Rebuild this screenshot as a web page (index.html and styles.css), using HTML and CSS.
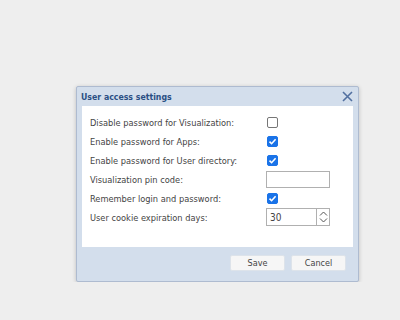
FILE: index.html
```html
<!DOCTYPE html>
<html lang="en">
<head>
  <meta charset="UTF-8" />
  <title>User access settings</title>
  <link rel="stylesheet" href="styles.css">
</head>
<body>
  <div class="dialog">
    <div class="dialog-title">
      <span>User access settings</span>
      <svg class="close" width="11" height="11" viewBox="0 0 11 11"><path d="M1 1L10 10M10 1L1 10" stroke="#5270a0" stroke-width="1.6"/></svg>
    </div>
    <div class="dialog-body">
      <div class="row"><label>Disable password for Visualization:</label><span class="check"></span></div>
      <div class="row"><label>Enable password for Apps:</label><span class="check on"></span></div>
      <div class="row"><label>Enable password for User directory:</label><span class="check on"></span></div>
      <div class="row"><label>Visualization pin code:</label><span class="field"></span></div>
      <div class="row"><label>Remember login and password:</label><span class="check on"></span></div>
      <div class="row"><label>User cookie expiration days:</label>
        <span class="field number"><span class="value">30</span>
          <span class="spin">
            <svg width="9" height="14" viewBox="0 0 9 14"><path d="M1 5.5L4.5 2L8 5.5M1 8.5L4.5 12L8 8.5" fill="none" stroke="#555" stroke-width="1"/></svg>
          </span>
        </span>
      </div>
    </div>
    <div class="dialog-footer">
      <button class="btn">Save</button>
      <button class="btn">Cancel</button>
    </div>
  </div>
</body>
</html>
```

FILE: styles.css
```css
body {
  margin: 0;
  background-color: #eeeeee;
  font-family: "DejaVu Sans Condensed", "DejaVu Sans", Tahoma, sans-serif;
  font-size: 9.2px;
  color: #444;
}
.dialog {
  margin: 86px 0 0 76px;
  width: 281px;
  height: 194px;
  background-color: #d3deec;
  border: 1px solid #aebbd0;
  border-radius: 2px;
  box-shadow: 0 1px 4px rgba(0,0,0,0.2);
  display: flex;
  flex-direction: column;
}
.dialog-title {
  height: 19px;
  padding: 0 5px 0 4px;
  display: flex;
  align-items: center;
  justify-content: space-between;
  font-weight: bold;
  font-size: 8.7px;
  color: #2a4f84;
}
.dialog-body {
  margin: 0 5px;
  background-color: #fff;
  height: 133px;
  padding: 8px 0 0 8px;
  display: flex;
  flex-direction: column;
  gap: 3px;
}
.row {
  display: flex;
  align-items: center;
  height: 16px;
}
.row label {
  width: 176px;
}
.check {
  width: 9px;
  height: 9px;
  border: 1px solid #767676;
  border-radius: 2px;
  margin-left: 1px;
  background-color: #fff;
}
.check.on {
  background-color: #1a73e8;
  border-color: #1a73e8;
  background-image: url("data:image/svg+xml,%3Csvg xmlns='http://www.w3.org/2000/svg' width='9' height='9' viewBox='0 0 9 9'%3E%3Cpath d='M1.5 4.6L3.6 6.7L7.6 2.3' fill='none' stroke='%23fff' stroke-width='1.6'/%3E%3C/svg%3E");
}
.field {
  width: 62px;
  height: 15px;
  border: 1px solid #b0b0b0;
  background-color: #fff;
}
.field.number {
  height: 16px;
  display: flex;
  align-items: center;
  justify-content: space-between;
}
.value {
  padding-left: 3px;
  font-size: 10px;
}
.spin {
  width: 12px;
  height: 16px;
  border-left: 1px solid #b0b0b0;
  display: flex;
  align-items: center;
  justify-content: center;
}
.dialog-footer {
  flex: 1;
  display: flex;
  justify-content: flex-end;
  align-items: center;
  gap: 6px;
  padding: 0 12px 2px 0;
}
.btn {
  font-family: "DejaVu Sans Condensed", "DejaVu Sans", Tahoma, sans-serif;
  font-size: 9px;
  color: #444;
  width: 55px;
  height: 16px;
  padding: 0;
  background-color: #f6f6f6;
  border: 1px solid #dde3ea;
  border-radius: 2px;
}
```
